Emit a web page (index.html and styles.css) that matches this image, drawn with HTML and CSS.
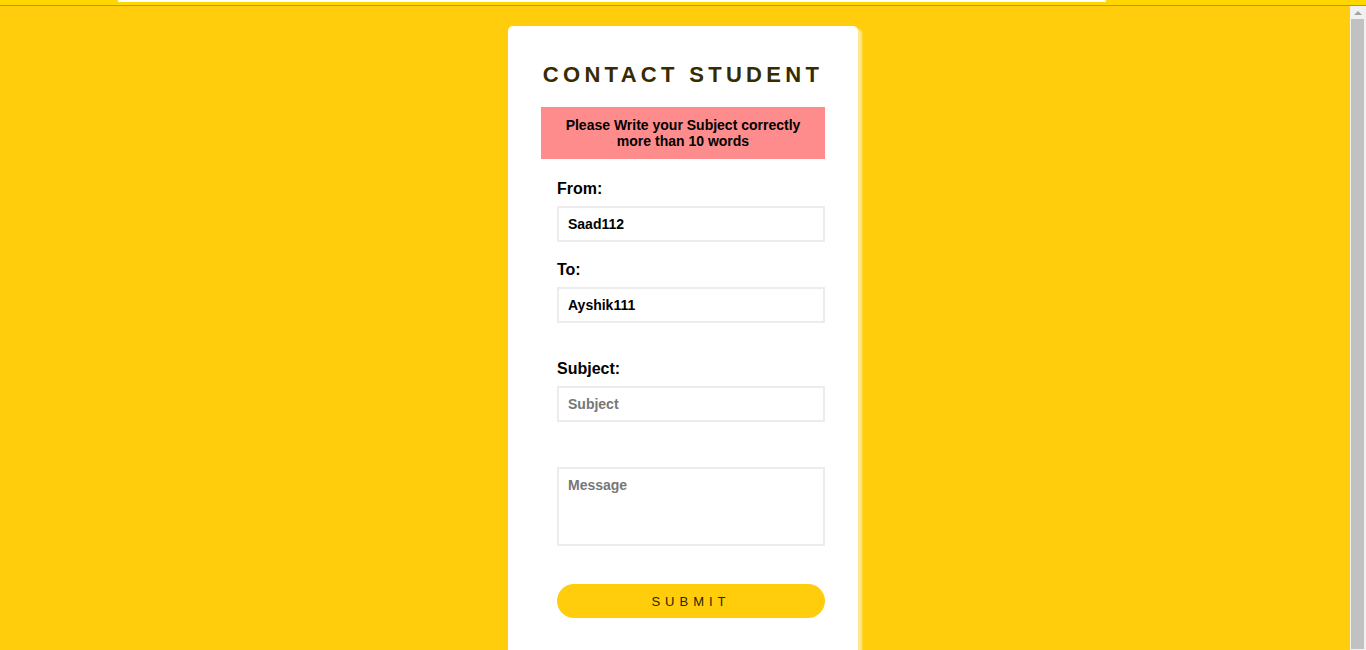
FILE: index.html
```html
<!DOCTYPE html>
<html>
<head>
<meta charset="utf-8">
<link rel="stylesheet" href="styles.css">
</head>
<body>
<div class="topbar"><div class="topbar-field"></div></div>
<div class="viewport">
  <main class="main">
    <div class="card">
      <h1 class="title">CONTACT STUDENT</h1>
      <div class="alert">Please Write your Subject correctly<br>more than 10 words</div>
      <form class="form">
        <label class="label label-from">From:</label>
        <input class="field" type="text" value="Saad112">
        <label class="label label-to">To:</label>
        <input class="field" type="text" value="Ayshik111">
        <label class="label label-subject">Subject:</label>
        <input class="field" type="text" placeholder="Subject">
        <textarea class="field message" placeholder="Message"></textarea>
        <button class="submit" type="button">SUBMIT</button>
      </form>
    </div>
  </main>
  <div class="scrollbar">
    <div class="scroll-arrow"></div>
    <div class="scroll-thumb"></div>
  </div>
</div>
</body>
</html>
```
FILE: styles.css
```css
html, body {
  margin: 0;
  padding: 0;
  height: 650px;
  overflow: hidden;
  font-family: "Liberation Sans", Arial, sans-serif;
}
.topbar {
  height: 5px;
  background: #ffd700;
  border-bottom: 1px solid #b99b00;
}
.topbar-field {
  margin-left: 118px;
  width: 988px;
  height: 2px;
  background: #ffffff;
}
.viewport {
  display: flex;
  height: 644px;
}
.main {
  flex: 1;
  background: #ffcd0c;
  display: flex;
  justify-content: center;
  padding: 20px 0 0 16px;
  overflow: hidden;
}
.card {
  width: 350px;
  height: 700px;
  background: #ffffff;
  border-radius: 5px;
  box-shadow: 4px 3px 2px rgba(255, 255, 255, 0.55);
  box-sizing: border-box;
  padding: 36px 33px 0 33px;
}
.title {
  margin: 0 -20px;
  white-space: nowrap;
  font-size: 22px;
  line-height: 25px;
  font-weight: bold;
  letter-spacing: 4.3px;
  text-align: center;
  color: #372b00;
  padding-left: 0;
}
.alert {
  margin-top: 20px;
  background: #ff8c8c;
  color: #000;
  font-weight: bold;
  font-size: 14px;
  line-height: 16px;
  text-align: center;
  padding: 10px 0;
}
.form {
  display: flex;
  flex-direction: column;
  padding-left: 16px;
}
.label {
  display: block;
  font-size: 16px;
  line-height: 18px;
  font-weight: bold;
  color: #000;
  margin-bottom: 8px;
}
.label-from { margin-top: 21px; }
.label-to { margin-top: 19px; }
.label-subject { margin-top: 37px; }
.field {
  display: block;
  box-sizing: border-box;
  width: 268px;
  height: 36px;
  border: 2px solid #ececec;
  padding: 0 9px;
  margin: 0;
  font-family: "Liberation Sans", Arial, sans-serif;
  font-weight: bold;
  font-size: 14px;
  color: #000;
  outline: none;
  background: #fff;
}
.field::placeholder {
  color: #777777;
  opacity: 1;
}
.message {
  margin-top: 45px;
  height: 79px;
  padding: 8px 9px;
  resize: none;
  line-height: 16px;
}
.submit {
  margin-top: 38px;
  width: 268px;
  height: 34px;
  border: none;
  border-radius: 17px;
  background: #ffcd0c;
  color: #2e2400;
  font-family: "Liberation Sans", Arial, sans-serif;
  font-size: 13px;
  letter-spacing: 5px;
  padding: 0;
}
.scrollbar {
  width: 16px;
  background: #f1f1f1;
}
.scroll-arrow {
  width: 0;
  height: 0;
  margin: 5px auto 0;
  border-left: 4px solid transparent;
  border-right: 4px solid transparent;
  border-bottom: 4px solid #a3a3a3;
}
.scroll-thumb {
  margin: 4px 2px 0 1px;
  height: 630px;
  background: #c1c1c1;
}
```
